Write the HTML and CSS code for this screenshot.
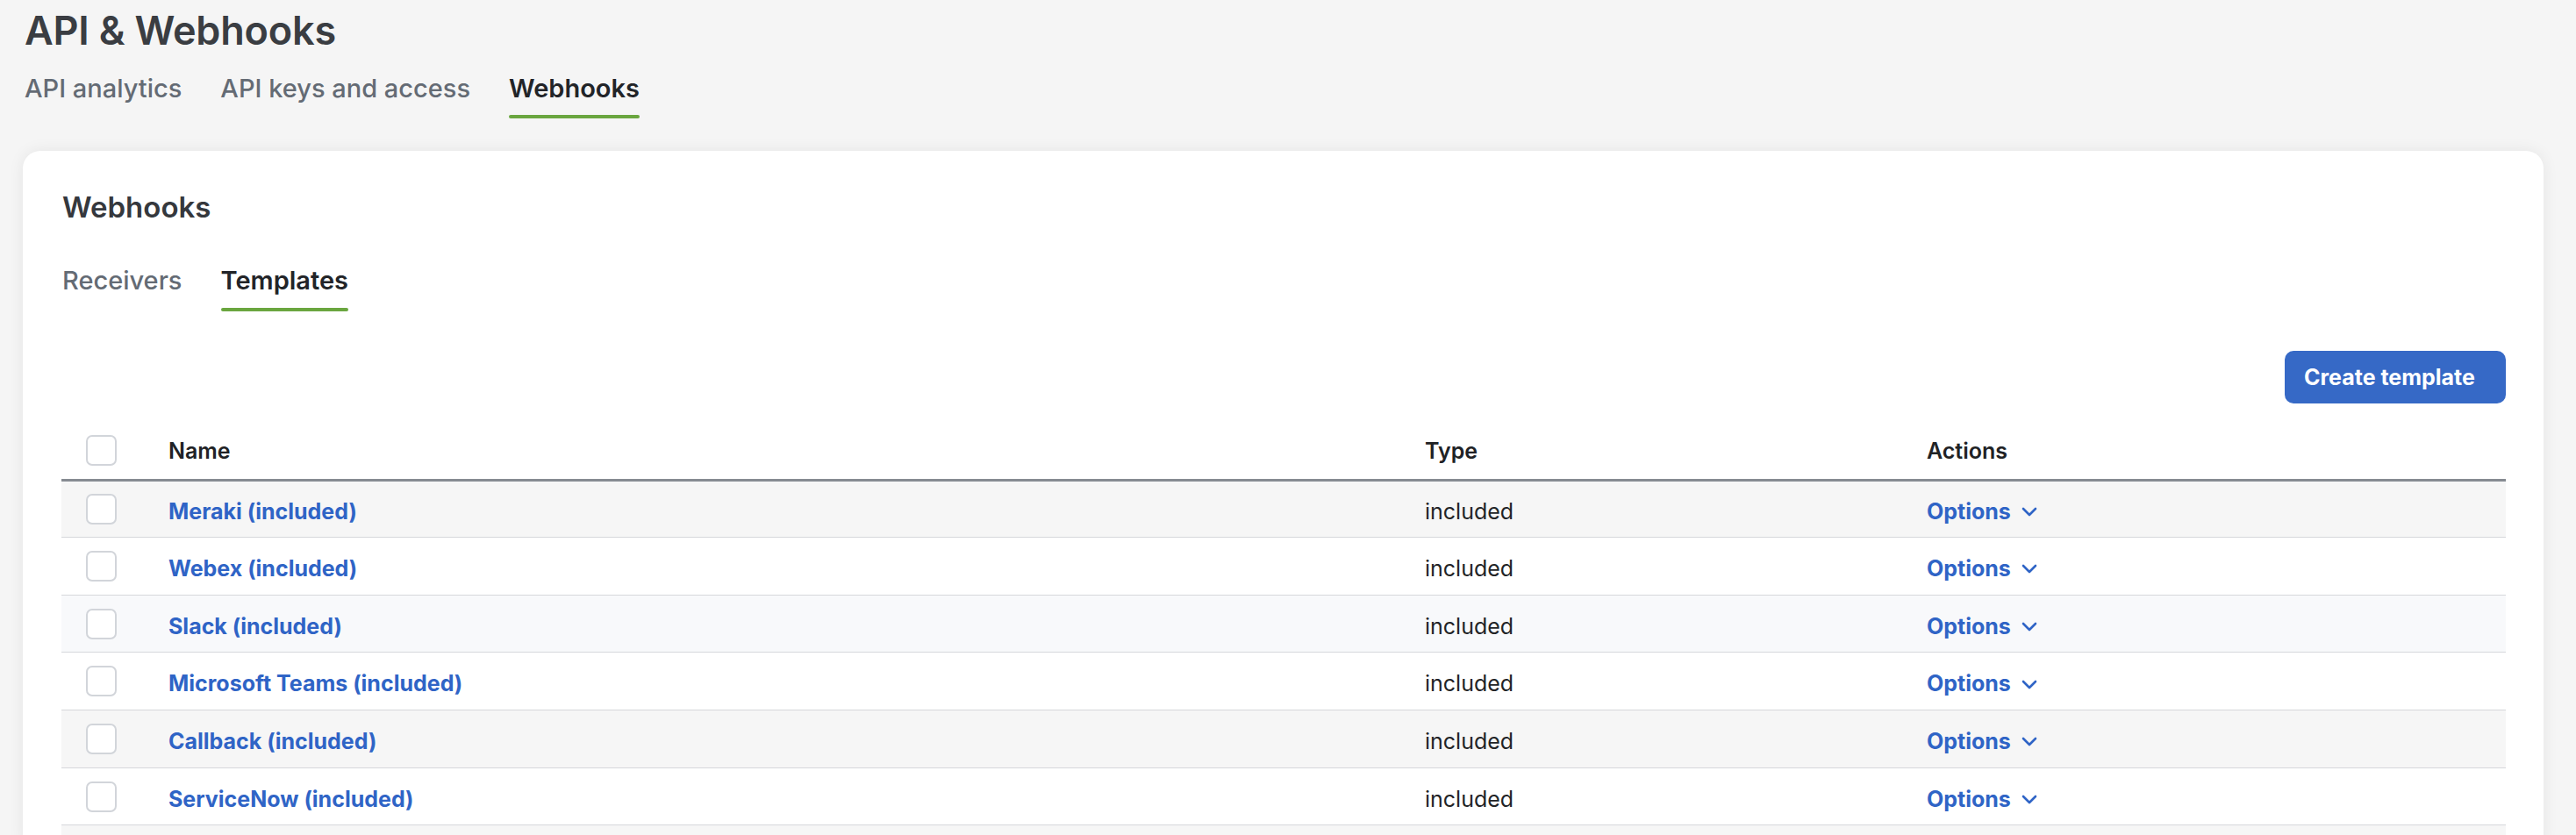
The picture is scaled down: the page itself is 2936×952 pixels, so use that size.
FILE: index.html
```html
<!DOCTYPE html>
<html lang="en">
<head>
<meta charset="utf-8">
<title>API &amp; Webhooks</title>
<link rel="stylesheet" href="styles.css">
</head>
<body>
<div class="page">
  <h1 class="page-title">API &amp; Webhooks</h1>
  <nav class="tabs top-tabs">
    <a class="tab">API analytics</a>
    <a class="tab">API keys and access</a>
    <a class="tab active">Webhooks</a>
  </nav>
  <section class="card">
    <h2 class="card-title">Webhooks</h2>
    <nav class="tabs sub-tabs">
      <a class="tab">Receivers</a>
      <a class="tab active">Templates</a>
    </nav>
    <div class="toolbar">
      <button class="btn-primary">Create template</button>
    </div>
    <table class="grid">
      <colgroup>
        <col class="c-check"><col class="c-name"><col class="c-type"><col class="c-actions">
      </colgroup>
      <thead>
        <tr>
          <th><span class="checkbox"></span></th>
          <th>Name</th>
          <th>Type</th>
          <th>Actions</th>
        </tr>
      </thead>
      <tbody>
        <tr class="shade">
          <td><span class="checkbox"></span></td>
          <td><a class="link">Meraki (included)</a></td>
          <td>included</td>
          <td><a class="options">Options <svg class="chev" viewBox="0 0 18 11" width="18" height="11"><path d="M2 2 L9 9 L16 2" fill="none" stroke="currentColor" stroke-width="2.6" stroke-linecap="round" stroke-linejoin="round"/></svg></a></td>
        </tr>
        <tr>
          <td><span class="checkbox"></span></td>
          <td><a class="link">Webex (included)</a></td>
          <td>included</td>
          <td><a class="options">Options <svg class="chev" viewBox="0 0 18 11" width="18" height="11"><path d="M2 2 L9 9 L16 2" fill="none" stroke="currentColor" stroke-width="2.6" stroke-linecap="round" stroke-linejoin="round"/></svg></a></td>
        </tr>
        <tr class="light">
          <td><span class="checkbox"></span></td>
          <td><a class="link">Slack (included)</a></td>
          <td>included</td>
          <td><a class="options">Options <svg class="chev" viewBox="0 0 18 11" width="18" height="11"><path d="M2 2 L9 9 L16 2" fill="none" stroke="currentColor" stroke-width="2.6" stroke-linecap="round" stroke-linejoin="round"/></svg></a></td>
        </tr>
        <tr>
          <td><span class="checkbox"></span></td>
          <td><a class="link">Microsoft Teams (included)</a></td>
          <td>included</td>
          <td><a class="options">Options <svg class="chev" viewBox="0 0 18 11" width="18" height="11"><path d="M2 2 L9 9 L16 2" fill="none" stroke="currentColor" stroke-width="2.6" stroke-linecap="round" stroke-linejoin="round"/></svg></a></td>
        </tr>
        <tr class="shade">
          <td><span class="checkbox"></span></td>
          <td><a class="link">Callback (included)</a></td>
          <td>included</td>
          <td><a class="options">Options <svg class="chev" viewBox="0 0 18 11" width="18" height="11"><path d="M2 2 L9 9 L16 2" fill="none" stroke="currentColor" stroke-width="2.6" stroke-linecap="round" stroke-linejoin="round"/></svg></a></td>
        </tr>
        <tr>
          <td><span class="checkbox"></span></td>
          <td><a class="link">ServiceNow (included)</a></td>
          <td>included</td>
          <td><a class="options">Options <svg class="chev" viewBox="0 0 18 11" width="18" height="11"><path d="M2 2 L9 9 L16 2" fill="none" stroke="currentColor" stroke-width="2.6" stroke-linecap="round" stroke-linejoin="round"/></svg></a></td>
        </tr>
        <tr class="shade">
          <td><span class="checkbox"></span></td>
          <td></td>
          <td></td>
          <td></td>
        </tr>
      </tbody>
    </table>
  </section>
</div>
</body>
</html>
```
FILE: styles.css
```css
* { box-sizing: border-box; }
html, body { margin: 0; padding: 0; }
body {
  background: #f5f5f5;
  font-family: Inter, "Liberation Sans", sans-serif;
  color: #222427;
  overflow: hidden;
  height: 952px;
}
.page {
  padding: 8px 37px 0 26px;
}
.page-title {
  margin: 0 0 0 2px;
  font-size: 45px;
  line-height: 54px;
  font-weight: 600;
  color: #3a3d42;
  letter-spacing: -0.2px;
}
.tabs {
  display: flex;
  gap: 44px;
}
.tab {
  display: block;
  font-size: 29px;
  line-height: 40px;
  font-weight: 500;
  color: #646b74;
  border-bottom: 4px solid transparent;
  position: relative;
}
.tab.active {
  color: #222428;
  font-weight: 600;
}
.tab.active::after {
  content: "";
  position: absolute;
  left: 0; right: 0;
  bottom: -4px;
  height: 4px;
  border-radius: 2px;
  background: #6aa63f;
}
.top-tabs {
  margin: 19px 0 0 2px;
}
.top-tabs .tab { padding-bottom: 10px; }
.card {
  margin-top: 37px;
  background: #fff;
  border-radius: 20px;
  box-shadow: 0 0 18px rgba(0, 0, 0, 0.07);
  padding: 44px 43px 0 44px;
  height: 800px;
}
.card-title {
  margin: 0 0 0 1px;
  font-size: 33px;
  line-height: 40px;
  font-weight: 600;
  color: #35383d;
}
.sub-tabs {
  margin: 44px 0 0 1px;
}
.sub-tabs .tab { padding-bottom: 11px; }
.toolbar {
  display: flex;
  justify-content: flex-end;
  margin-top: 45px;
}
.btn-primary {
  height: 60px;
  width: 252px;
  border: none;
  border-radius: 10px;
  background: #3669c6;
  color: #fff;
  font-family: Inter, "Liberation Sans", sans-serif;
  font-size: 25px;
  font-weight: 700;
  padding: 0 0 0 22px;
  text-align: left;
}
.grid {
  margin-top: 22px;
  width: 100%;
  border-collapse: collapse;
  table-layout: fixed;
  font-size: 25px;
}
.c-check { width: 122px; }
.c-name { width: 1432px; }
.c-type { width: 572px; }
.grid th {
  height: 65px;
  text-align: left;
  font-weight: 600;
  color: #202225;
  border-bottom: 3px solid #868b92;
  padding: 0;
  vertical-align: middle;
}
.grid td {
  height: 65.67px;
  padding: 5px 0 0;
  border-bottom: 1px solid #d6d7db;
  vertical-align: middle;
  color: #222427;
}
.grid tr.shade td { background: #f6f6f6; }
.grid tr.light td { background: #f8f9fb; }
.checkbox {
  display: block;
  width: 35px;
  height: 35px;
  margin-left: 28px;
  border: 2.5px solid #d2d5da;
  border-radius: 7px;
  background: #fff;
}
.grid td .checkbox { margin-top: -5px; }
.link, .options {
  color: #2f64c6;
  font-weight: 700;
}
.options {
  display: inline-flex;
  align-items: center;
  gap: 12px;
}
.chev { display: block; margin-top: 2px; }
```
